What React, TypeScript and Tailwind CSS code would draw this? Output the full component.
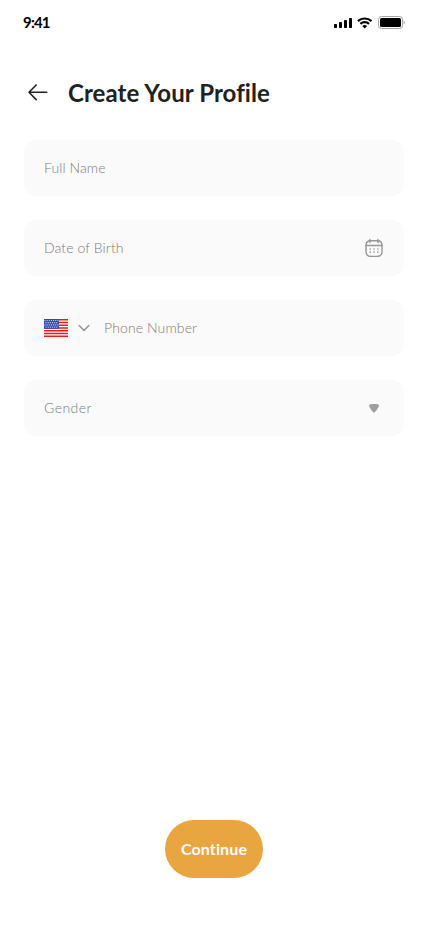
import React from "react";

function StatusBar() {
  return (
    <div className="flex h-11 items-center justify-between pl-[23px] pr-[23px] pt-px">
      <span className="mb-0.5 text-[15px] leading-5 font-bold tracking-[-0.8px] text-black">9:41</span>
      <div className="flex items-center">
        <svg width="18" height="10" viewBox="0 0 18 10" fill="#000">
          <rect x="0" y="6" width="3" height="4" rx="0.7" />
          <rect x="5" y="4" width="3" height="6" rx="0.7" />
          <rect x="10" y="2" width="3" height="8" rx="0.7" />
          <rect x="15" y="0" width="3" height="10" rx="0.7" />
        </svg>
        <svg className="ml-[5px]" width="16" height="12" viewBox="0 0 16 12" fill="none" stroke="#000" strokeWidth="2.2">
          <path d="M.9 4.100a10.200 10.200 0 0 1 13.600 0" />
          <path d="M3.400 6.900a6.300 6.300 0 0 1 8.600 0" />
          <path d="M7.700 11.400 5.300 9.100a3.400 3.400 0 0 1 4.800 0Z" fill="#000" stroke="none" />
        </svg>
        <svg className="ml-[5px]" width="27" height="13" viewBox="0 0 27 13">
          <rect x="0.5" y="0.5" width="24" height="12" rx="3" fill="none" stroke="#a3a3a3" />
          <rect x="2" y="2" width="21" height="9" rx="1.5" fill="#000" />
          <path d="M25.7 4.5c1.4.6 1.4 3.4 0 4Z" fill="#a3a3a3" />
        </svg>
      </div>
    </div>
  );
}

function Field({ label, spacing, children, leading }: { label: string; spacing: string; children?: React.ReactNode; leading?: React.ReactNode }) {
  return (
    <div className="flex h-14 items-center rounded-xl bg-[#fafafa] px-5">
      {leading}
      <span className={"flex-1 text-[14px] leading-5 font-light text-[#7c7c7c] " + spacing}>{label}</span>
      {children}
    </div>
  );
}

function Flag() {
  const stripes = [0, 1, 2, 3, 4, 5, 6];
  const stars = [0, 1, 2, 3, 4, 5, 6];
  return (
    <svg width="24" height="18" viewBox="0 0 24 18">
      <rect width="24" height="18" fill="#fff" />
      {stripes.map((i) => (
        <rect key={i} y={i * 2.75} width="24" height="1.5" fill="#e31d1c" />
      ))}
      <rect width="15" height="9.8" fill="#3049ad" />
      {[0, 1, 2, 3].map((r) =>
        stars.slice(r % 2).map((c) => (
          <circle key={r + "-" + c} cx={c * 2.15 + (r % 2 ? -0.1 : 1)} cy={r * 2.2 + 1.5} r="0.62" fill="#e2e5f7" />
        ))
      )}
    </svg>
  );
}

function CalendarIcon() {
  return (
    <svg width="20" height="20" viewBox="0 0 20 20" fill="none" stroke="#969696" strokeWidth="1.4" strokeLinecap="round">
      <path d="M6 1.500v3M14 1.500v3M2.200 7.500h15.600" />
      <path d="M6.600 2.700h6.800c2.900 0 4.600 1.700 4.600 4.600v6.200c0 3.200-1.900 4.900-5 4.900H7c-3.100 0-5-1.700-5-4.900V7.300c0-2.900 1.700-4.600 4.600-4.600Z" />
      <path d="M6.200 11h.1M10 11h.1M13.800 11h.1M6.200 14.100h.1M10 14.100h.1M13.800 14.100h.1" strokeWidth="1.6" />
    </svg>
  );
}

export default function App() {
  return (
    <main className="flex h-[926px] w-[428px] flex-col bg-white font-['Lato','Open_Sans',sans-serif]">
      <StatusBar />
      <header className="mt-6 flex h-12 items-center pl-7">
        <svg width="20" height="18" viewBox="0 0 20 18" fill="none" stroke="#212121" strokeWidth="1.6" strokeLinecap="round" strokeLinejoin="round">
          <path d="M18.700 9.300H1M8.200 2 1 9.300l7.200 7.300" />
        </svg>
        <h1 className="mt-px ml-5 text-[24px] leading-8 font-bold tracking-[0.08px] whitespace-nowrap text-[#212121]">Create Your Profile</h1>
      </header>
      <section className="mt-6 flex flex-col gap-6 px-6">
        <Field label="Full Name" spacing="tracking-[0.1px]" />
        <Field label="Date of Birth" spacing="tracking-[0.1px]">
          <CalendarIcon />
        </Field>
        <Field
          label="Phone Number"
          spacing="tracking-[0.12px]"
          leading={
            <div className="mr-3.5 flex items-center">
              <Flag />
              <svg className="ml-2.5" width="12" height="8" viewBox="0 0 12 8" fill="none" stroke="#969696" strokeWidth="1.6" strokeLinecap="round" strokeLinejoin="round">
                <path d="m1.200 1.500 4.800 5 4.800-5" />
              </svg>
            </div>
          }
        />
        <Field label="Gender" spacing="tracking-[0.45px]">
          <svg className="mr-[5px]" width="10" height="9" viewBox="0 0 10 9" fill="#9e9e9e">
            <path d="M1.500.3C3.800-.1 6.200-.1 8.500.3c1.400.2 1.800 1.300 1.100 2.500C8.700 4.600 7.500 6.400 6 7.900c-.7.7-1.300.7-2 0C2.500 6.400 1.300 4.600.4 2.800-.3 1.600.1.500 1.500.3Z" />
          </svg>
        </Field>
      </section>
      <button className="mt-auto mb-12 flex h-[58px] w-[98px] shrink-0 items-center justify-center self-center rounded-full bg-[#e9a540] text-[16px] font-bold tracking-[0.13px] text-white">Continue</button>
    </main>
  );
}
